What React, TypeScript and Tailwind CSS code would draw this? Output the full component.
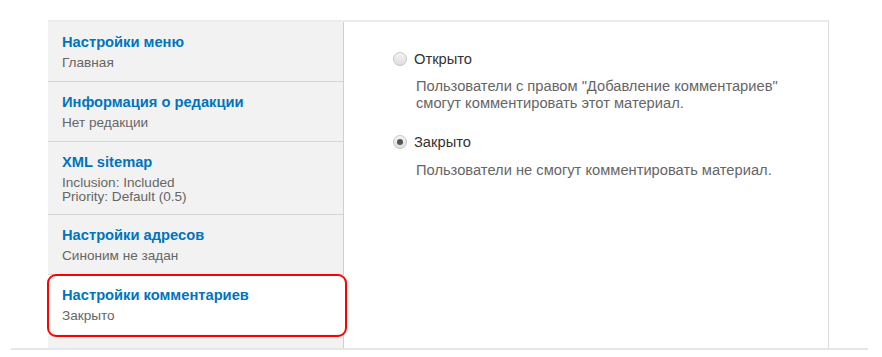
import React from "react";

const font = { fontFamily: '"Liberation Sans", Arial, sans-serif' };

function Tab({ title, lines, last, tight }: { title: string; lines: string[]; last?: boolean; tight?: boolean }) {
  return (
    <div
      className={
        "pl-[14px] pr-3 pt-[11px] " +
        (tight ? "pb-[10px] " : "pb-[11px] ") +
        (last ? "" : "border-b border-[#d6d6d6]")
      }
    >
      <div className="text-[14.7px] leading-[18px] font-bold text-[#0074bd]">{title}</div>
      <div className="mt-[5px] text-[13.6px] leading-[14px] text-[#666]">
        {lines.map((l) => (
          <div key={l}>{l}</div>
        ))}
      </div>
    </div>
  );
}

function Radio({ checked }: { checked?: boolean }) {
  return (
    <span className="w-[14px] h-[14px] rounded-full border border-[#c4c4c4] bg-gradient-to-b from-[#f4f4f4] to-[#dedede] flex items-center justify-center shrink-0">
      {checked && <span className="w-[6px] h-[6px] rounded-full bg-[#555]" />}
    </span>
  );
}

export default function App() {
  return (
    <div className="w-[882px] h-[357px] bg-white overflow-hidden pt-[20px]" style={font}>
      <div className="ml-[48px] w-[781px] h-[328px] border-t-2 border-r border-t-[#ececec] border-r-[#dcdcdc] flex">
        <div className="w-[296px] bg-[#f2f2f2] border-r border-[#cfcfcf] flex flex-col">
          <Tab title="Настройки меню" lines={["Главная"]} />
          <Tab title="Информация о редакции" lines={["Нет редакции"]} />
          <Tab title="XML sitemap" lines={["Inclusion: Included", "Priority: Default (0.5)"]} tight />
          <Tab title="Настройки адресов" lines={["Синоним не задан"]} />
          <div className="relative bg-white mr-[-1px]">
            <Tab title="Настройки комментариев" lines={["Закрыто"]} last />
            <div className="absolute left-[-1px] right-[-3px] top-[-1px] bottom-[-3px] border-2 border-[#ff0000] rounded-[9px]" />
          </div>
        </div>
        <div className="flex-1 pl-[49px] pt-[28px]">
          <div className="flex items-center gap-[7px] h-[18px]">
            <Radio />
            <span className="text-[14.7px] text-[#333] leading-[18px]">Открыто</span>
          </div>
          <div className="mt-[10px] ml-[23px] text-[14.7px] leading-[17px] text-[#666]">
            Пользователи с правом "Добавление комментариев"
            <br />
            смогут комментировать этот материал.
          </div>
          <div className="mt-[21px] flex items-center gap-[7px] h-[18px]">
            <Radio checked />
            <span className="text-[14.7px] text-[#333] leading-[18px]">Закрыто</span>
          </div>
          <div className="mt-[11px] ml-[23px] text-[14.7px] leading-[17px] text-[#666]">
            Пользователи не смогут комментировать материал.
          </div>
        </div>
      </div>
      <div className="ml-[11px] w-[857px] h-[2px] bg-[#e6e6e6]" />
    </div>
  );
}
